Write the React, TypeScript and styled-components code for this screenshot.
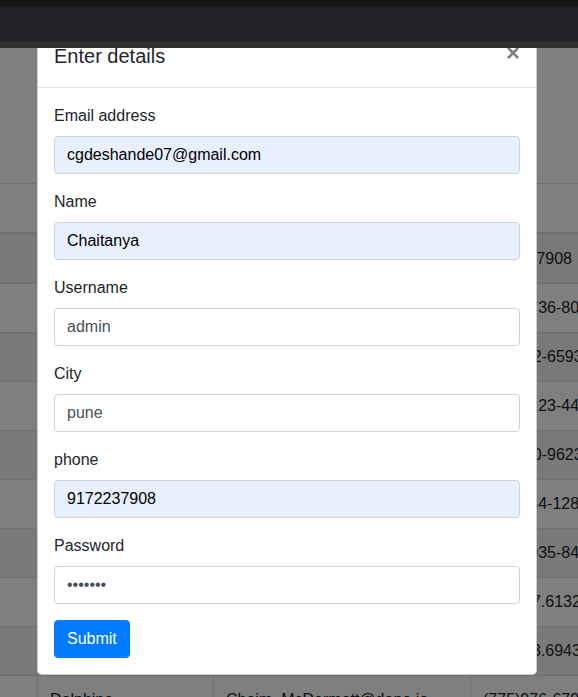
import React from "react";
import styled, { createGlobalStyle } from "styled-components";

const GlobalStyle = createGlobalStyle`
  *, *::before, *::after { box-sizing: border-box; }
  html, body { margin: 0; padding: 0; }
  body {
    font-family: "Liberation Sans", Arial, Helvetica, sans-serif;
    font-size: 16px;
    line-height: 1.5;
    color: #212529;
    background: #fff;
    overflow: hidden;
  }
`;

const Page = styled.div`
  position: relative;
  width: 578px;
  height: 697px;
  overflow: hidden;
  background: #fff;
`;

const TopBar = styled.header`
  position: relative;
  z-index: 3;
  display: flex;
  flex-direction: column;
  height: 48px;
`;

const Band = styled.div<{ $h: number; $bg: string }>`
  height: ${(p) => p.$h}px;
  background: ${(p) => p.$bg};
  flex: none;
`;

const Main = styled.main`
  display: flex;
  flex-direction: column;
`;

const Spacer = styled.div`
  height: 135px;
`;

const Row = styled.div<{ $striped?: boolean; $head?: boolean }>`
  display: grid;
  grid-template-columns: 37px 176px 257px 1fr;
  border-top: 1px solid #dee2e6;
  border-bottom: ${(p) => (p.$head ? "2px solid #dee2e6" : "0")};
  background: ${(p) => (p.$striped ? "rgba(0,0,0,0.05)" : "transparent")};
`;

const Cell = styled.div<{ $first?: boolean; $head?: boolean }>`
  padding: 12px;
  line-height: 24px;
  white-space: nowrap;
  overflow: hidden;
  font-weight: ${(p) => (p.$head ? 700 : 400)};
  border-left: ${(p) => (p.$first ? "0" : "1px solid #dee2e6")};
`;

const Backdrop = styled.div`
  position: absolute;
  inset: 0;
  z-index: 1;
  background: rgba(0, 0, 0, 0.5);
`;

const Modal = styled.div`
  position: absolute;
  z-index: 2;
  top: 24px;
  left: 37px;
  width: 500px;
  background: #fff;
  border: 1px solid rgba(0, 0, 0, 0.2);
  border-radius: 4.8px;
  display: flex;
  flex-direction: column;
`;

const ModalHeader = styled.div`
  display: flex;
  align-items: flex-start;
  justify-content: space-between;
  padding: 16px;
  border-bottom: 1px solid #dee2e6;
`;

const Title = styled.h5`
  margin: 0;
  font-size: 20px;
  font-weight: 400;
  line-height: 30px;
  color: #212529;
`;

const Close = styled.button`
  margin: -16px -16px -16px auto;
  padding: 16px;
  background: transparent;
  border: 0;
  font-family: inherit;
  font-size: 24px;
  font-weight: 700;
  line-height: 1;
  color: #000;
  opacity: 0.5;
  text-shadow: 0 1px 0 #fff;
  cursor: pointer;
`;

const ModalBody = styled.form`
  padding: 16px;
  display: flex;
  flex-direction: column;
`;

const Group = styled.div`
  display: flex;
  flex-direction: column;
  margin-bottom: 16px;
`;

const Label = styled.label`
  margin-bottom: 8px;
  line-height: 24px;
  color: #212529;
`;

const Input = styled.input<{ $autofilled?: boolean }>`
  display: block;
  width: 100%;
  height: 38px;
  padding: 6px 12px;
  font-family: inherit;
  font-size: 16px;
  line-height: 24px;
  color: ${(p) => (p.$autofilled ? "#000" : "#495057")};
  background: ${(p) => (p.$autofilled ? "#e8f0fe" : "#fff")};
  border: 1px solid #ced4da;
  border-radius: 4px;
  outline: none;
`;

const Submit = styled.button`
  align-self: flex-start;
  height: 38px;
  padding: 6px 12px;
  font-family: inherit;
  font-size: 16px;
  line-height: 24px;
  color: #fff;
  background: #007bff;
  border: 1px solid #007bff;
  border-radius: 4px;
  cursor: pointer;
`;

const people = [
  { name: "Chaitanya", email: "cgdeshande07@gmail.com", phone: "9172237908" },
  { name: "Leanne Graham", email: "Sincere@april.biz", phone: "1-555-736-8012" },
  { name: "Ervin Howell", email: "Shanna@melissa.tv", phone: "555-542-6593" },
  { name: "Clementine", email: "Nathan@yesenia.net", phone: "1-555-123-4455" },
  { name: "Patricia", email: "Julianne@kory.org", phone: "555-550-9623" },
  { name: "Chelsey", email: "Lucio_Hettinger@annie.ca", phone: "(555)654-1289" },
  { name: "Kurtis", email: "Karley_Dach@jasper.info", phone: "1-555-035-8412" },
  { name: "Nicholas", email: "Telly.Hoeger@billy.biz", phone: "555.557.6132" },
  { name: "Glenna", email: "Sherwood@rosamond.me", phone: "555.553.6943" },
  { name: "Dolphine", email: "Chaim_McDermott@dapo.io", phone: "(775)976-6794" },
];

const fields = [
  { label: "Email address", type: "email", value: "cgdeshande07@gmail.com", auto: true },
  { label: "Name", type: "text", value: "Chaitanya", auto: true },
  { label: "Username", type: "text", value: "admin", auto: false },
  { label: "City", type: "text", value: "pune", auto: false },
  { label: "phone", type: "text", value: "9172237908", auto: true },
  { label: "Password", type: "password", value: "1234567", auto: false },
];

export default function App() {
  return (
    <Page>
      <GlobalStyle />
      <TopBar>
        <Band $h={6} $bg="#141414" />
        <Band $h={1} $bg="#1c1c1d" />
        <Band $h={35} $bg="#212327" />
        <Band $h={6} $bg="#2f2f2f" />
      </TopBar>
      <Main>
        <Spacer />
        <Row $head>
          <Cell $first $head />
          <Cell $head>Name</Cell>
          <Cell $head>Email</Cell>
          <Cell $head>Phone</Cell>
        </Row>
        {people.map((p, i) => (
          <Row key={i} $striped={i % 2 === 0}>
            <Cell $first />
            <Cell>{p.name}</Cell>
            <Cell>{p.email}</Cell>
            <Cell>{p.phone}</Cell>
          </Row>
        ))}
      </Main>
      <Backdrop />
      <Modal role="dialog">
        <ModalHeader>
          <Title>Enter details</Title>
          <Close type="button" aria-label="Close">
            ×
          </Close>
        </ModalHeader>
        <ModalBody onSubmit={(e) => e.preventDefault()}>
          {fields.map((f) => (
            <Group key={f.label}>
              <Label>{f.label}</Label>
              <Input type={f.type} defaultValue={f.value} $autofilled={f.auto} />
            </Group>
          ))}
          <Submit type="submit">Submit</Submit>
        </ModalBody>
      </Modal>
    </Page>
  );
}
